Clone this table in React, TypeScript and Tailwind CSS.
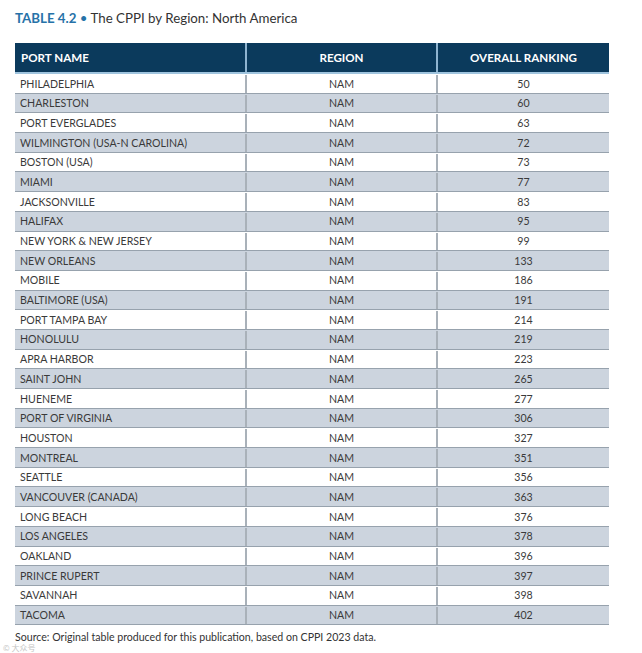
const ROWS: [string, number][] = [
  ["PHILADELPHIA", 50],
  ["CHARLESTON", 60],
  ["PORT EVERGLADES", 63],
  ["WILMINGTON (USA-N CAROLINA)", 72],
  ["BOSTON (USA)", 73],
  ["MIAMI", 77],
  ["JACKSONVILLE", 83],
  ["HALIFAX", 95],
  ["NEW YORK & NEW JERSEY", 99],
  ["NEW ORLEANS", 133],
  ["MOBILE", 186],
  ["BALTIMORE (USA)", 191],
  ["PORT TAMPA BAY", 214],
  ["HONOLULU", 219],
  ["APRA HARBOR", 223],
  ["SAINT JOHN", 265],
  ["HUENEME", 277],
  ["PORT OF VIRGINIA", 306],
  ["HOUSTON", 327],
  ["MONTREAL", 351],
  ["SEATTLE", 356],
  ["VANCOUVER (CANADA)", 363],
  ["LONG BEACH", 376],
  ["LOS ANGELES", 378],
  ["OAKLAND", 396],
  ["PRINCE RUPERT", 397],
  ["SAVANNAH", 398],
  ["TACOMA", 402],
]

export default function App() {
  return (
    <div className="h-[653px] w-[642px] bg-white pl-[15px] pt-[9px] font-['Lato','Open_Sans',sans-serif] text-[#3a3a3a]">
      <h1 className="text-[13.3px] leading-[18px]">
        <span className="font-bold text-[#2672a8]">TABLE 4.2</span>
        <span className="text-[#2672a8]"> • </span>
        <span className="text-[#333]">The CPPI by Region: North America</span>
      </h1>

      <div className="mt-[16px] w-[594px]">
        <div className="grid h-[31px] grid-cols-[230px_191px_173px] border-b-2 border-[#9fc4de] bg-[#0b3a5c] text-[11.6px] font-bold text-white">
          <div className="flex items-center pl-[6px]">PORT NAME</div>
          <div className="flex items-center justify-center border-l-2 border-[#8fb4d0]">REGION</div>
          <div className="flex items-center justify-center border-l-2 border-[#8fb4d0]">OVERALL RANKING</div>
        </div>

        {ROWS.map(([name, rank], i) => (
          <div
            key={name}
            className={
              "grid h-[19.7px] grid-cols-[230px_191px_173px] border-b border-[#97a2ad] pt-[1px] text-[10.6px] leading-none " +
              (i % 2 === 1 ? "bg-[#ccd4de]" : "bg-white")
            }
          >
            <div className="flex items-center pl-[5px]">{name}</div>
            <div className="flex items-center justify-center border-l-2 border-[#a9b1b9]">NAM</div>
            <div className="flex items-center justify-center border-l-2 border-[#a9b1b9]">{rank}</div>
          </div>
        ))}
      </div>

      <p className="mt-[5px] text-[10.6px] leading-[14px] text-[#333]">
        Source: Original table produced for this publication, based on CPPI 2023 data.
      </p>
      <div className="-ml-[12px] mt-[-1px] font-['Noto_Sans_CJK_SC',sans-serif] text-[8px] leading-[9px] text-[#c4c4c4]">
        © 大众号
      </div>
    </div>
  )
}
